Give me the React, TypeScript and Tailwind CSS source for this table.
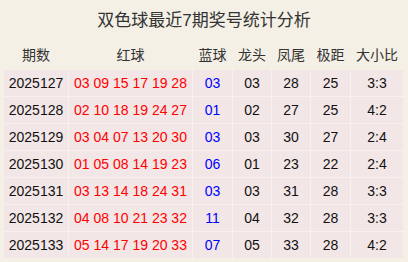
import React from "react";

const rows = [
  ["2025127", "03 09 15 17 19 28", "03", "03", "28", "25", "3:3"],
  ["2025128", "02 10 18 19 24 27", "01", "02", "27", "25", "4:2"],
  ["2025129", "03 04 07 13 20 30", "03", "03", "30", "27", "2:4"],
  ["2025130", "01 05 08 14 19 23", "06", "01", "23", "22", "2:4"],
  ["2025131", "03 13 14 18 24 31", "03", "03", "31", "28", "3:3"],
  ["2025132", "04 08 10 21 23 32", "11", "04", "32", "28", "3:3"],
  ["2025133", "05 14 17 19 20 33", "07", "05", "33", "28", "4:2"],
];

const headers = ["期数", "红球", "蓝球", "龙头", "凤尾", "极距", "大小比"];

export default function App() {
  return (
    <div
      className="w-[408px] h-[262px] bg-[#f4f0e6] text-[#222] overflow-hidden"
      style={{ fontFamily: '"Liberation Sans", "Noto Sans CJK SC", sans-serif' }}
    >
      <div className="h-[40px] flex items-center justify-center text-[17px] text-[#333] pt-[1px]">
        双色球最近7期奖号统计分析
      </div>
      <div className="ml-[4px] w-[399px] grid grid-cols-[64px_123px_39px_38px_38px_39px_52px] gap-x-px">
        {headers.map((h) => (
          <div key={h} className="h-[30px] flex items-center justify-center text-[14px] text-[#333]">
            {h}
          </div>
        ))}
      </div>
      <div className="ml-[4px] w-[399px] grid grid-cols-[64px_123px_39px_38px_38px_39px_52px] gap-px bg-[#f8f1ee]">
        {rows.map((r) =>
          r.map((c, i) => (
            <div
              key={r[0] + i}
              className={
                "h-[26px] flex items-center justify-center text-[14px] bg-[#f2e6e6] " +
                (i === 1 ? "text-[#ff0000]" : i === 2 ? "text-[#0000ff]" : "text-[#111]")
              }
            >
              {c}
            </div>
          ))
        )}
      </div>
    </div>
  );
}
